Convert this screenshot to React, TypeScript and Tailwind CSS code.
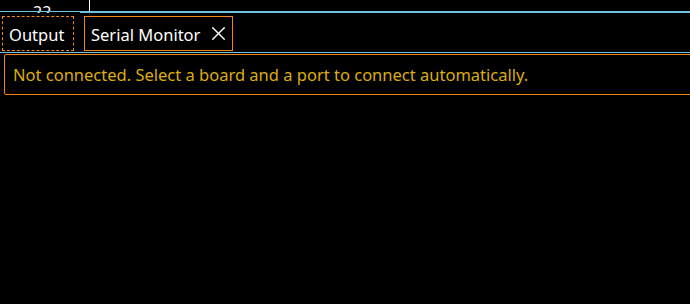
import { X } from 'lucide-react'

export default function App() {
  return (
    <div
      className="w-[690px] h-[304px] bg-black overflow-hidden flex flex-col text-white"
      style={{ fontFamily: '"Noto Sans", "Open Sans", sans-serif' }}
    >
      {/* editor strip peeking above the panel */}
      <div className="relative h-[13px] shrink-0 overflow-hidden">
        <span className="absolute left-[33px] top-[4px] text-[16px] leading-none">22</span>
        <div className="absolute left-[89px] top-0 h-[11px] w-px bg-white" />
        <div className="absolute left-0 right-0 top-[11px] h-px bg-[#6fc3df]" />
        <div className="absolute left-[80px] right-0 top-[11px] h-[2px] bg-[#6fc3df]" />
      </div>

      {/* tabs */}
      <div className="flex items-start gap-[10px] h-[39px] shrink-0 pl-[2px] pt-[3px]">
        <div className="h-[35px] w-[72px] pl-[6px] pt-[3px] flex items-center border border-dashed border-[#f38518] text-[16.5px]">
          Output
        </div>
        <div className="h-[35px] w-[149px] pl-[6px] pt-[3px] flex items-center gap-[7px] border border-[#f38518] text-[16.5px]">
          <span>Serial Monitor</span>
          <X className="w-[23px] h-[23px] -mt-[3px]" strokeWidth={1.5} />
        </div>
      </div>

      <div className="h-px bg-[#6fc3df] shrink-0" />

      {/* message */}
      <div className="mt-px ml-[4px] -mr-[4px] h-[41px] shrink-0 flex items-center pl-[8px] pt-[2px] border border-[#f38518] rounded-[2px] text-[16.5px] text-[#dcad0e]">
        Not connected. Select a board and a port to connect automatically.
      </div>
    </div>
  )
}
